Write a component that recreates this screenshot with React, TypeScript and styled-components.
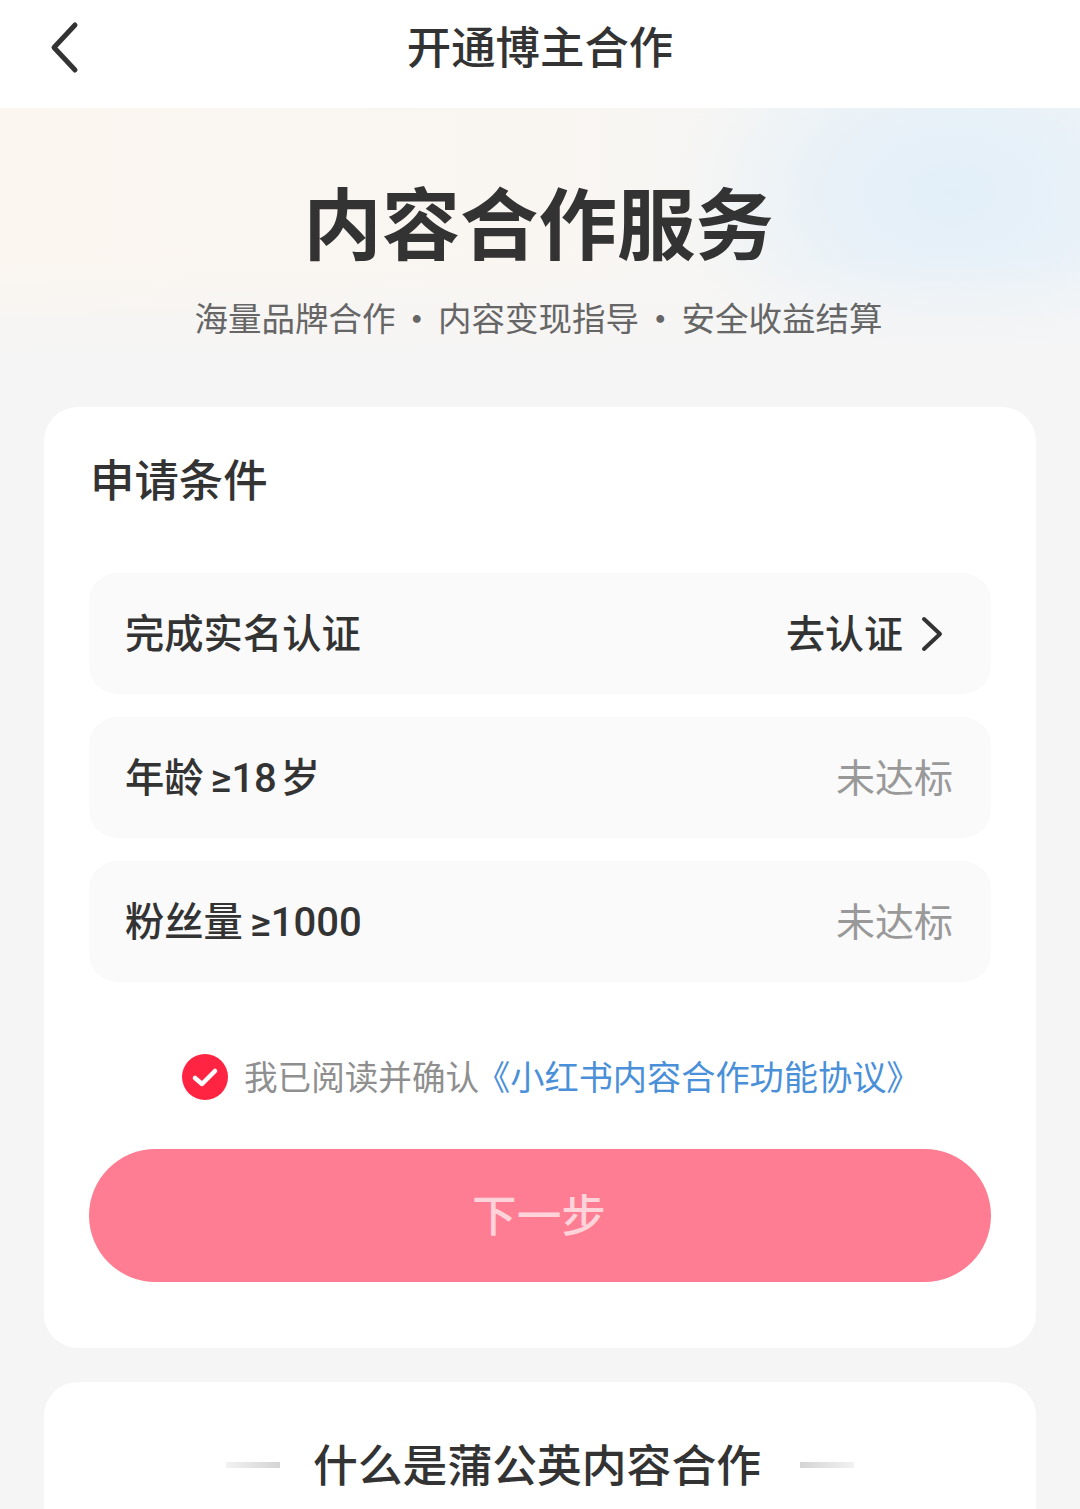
import styled, { createGlobalStyle } from "styled-components"

const GlobalStyle = createGlobalStyle`
  html, body {
    margin: 0;
    padding: 0;
    background: #f5f5f5;
  }
  * { box-sizing: border-box; }
`

const Page = styled.div`
  width: 1080px;
  height: 1509px;
  overflow: hidden;
  background: #f5f5f5;
  font-family: "Noto Sans CJK SC", "Noto Sans", sans-serif;
  color: #333;
`

const Header = styled.header`
  height: 108px;
  background: #fff;
  display: flex;
  align-items: center;
  justify-content: center;
  position: relative;
`

const BackIcon = styled.svg`
  position: absolute;
  left: 44px;
  top: 18px;
  width: 44px;
  height: 60px;
`

const HeaderTitle = styled.h1`
  margin: 0 0 18px;
  font-size: 44.4px;
  line-height: 56px;
  font-weight: 500;
  color: #333;
`

const Hero = styled.section`
  height: 299px;
  padding-top: 67px;
  display: flex;
  flex-direction: column;
  align-items: center;
  background:
    linear-gradient(to bottom, rgba(245, 245, 245, 0) 50%, #f5f5f5 85%),
    radial-gradient(ellipse 280px 190px at 950px 85px, #e2eff9 0%, rgba(226, 239, 249, 0.6) 50%, rgba(226, 239, 249, 0) 100%),
    linear-gradient(to right, #fbf6f0 0%, #f9f6f2 50%, #f3f5f7 100%);
`

const HeroTitle = styled.h2`
  margin: 0 3px 0 0;
  font-size: 78.4px;
  line-height: 90px;
  font-weight: 700;
  color: #333;
`

const HeroSub = styled.p`
  margin: 29px 3px 0 0;
  font-size: 33.5px;
  line-height: 46px;
  font-weight: 400;
  color: #666;
  display: flex;
  align-items: center;
`

const SubDot = styled.span`
  width: 42.5px;
  text-align: center;
  font-weight: 500;
`

const Card = styled.section`
  width: 992px;
  margin: 0 auto;
  background: #fff;
  border-radius: 34px;
`

const ApplyCard = styled(Card)`
  height: 941px;
  padding: 42px 45px 0 45px;
`

const CardTitle = styled.h3`
  margin: 0 0 66px 1px;
  font-size: 44.4px;
  line-height: 58px;
  font-weight: 500;
  color: #333;
`

const RowList = styled.div`
  display: flex;
  flex-direction: column;
  gap: 23px;
`

const Row = styled.div`
  height: 121px;
  padding: 0 38px 0 36px;
  border-radius: 28px;
  background: #fafafa;
  display: flex;
  align-items: center;
  justify-content: space-between;
`

const RowLabel = styled.span`
  padding-bottom: 6px;
  font-size: 39.3px;
  font-weight: 500;
  color: #333;
  display: flex;
  align-items: baseline;
`

// digits and the sign are set in a latin face, not the CJK one
const Metric = styled.span`
  margin: 0 4px 0 7px;
  font-family: "Roboto", sans-serif;
  font-size: 40px;
  font-weight: 500;
`

const RowAction = styled.span`
  margin-right: 9px;
  padding-bottom: 6px;
  display: flex;
  align-items: center;
  gap: 17px;
  font-size: 39px;
  font-weight: 500;
  color: #333;
`

const Chevron = styled.svg`
  width: 24px;
  height: 36px;
  margin-top: 7px;
`

const RowStatus = styled.span`
  padding-bottom: 6px;
  font-size: 39px;
  color: #999;
`

const Agreement = styled.div`
  margin-top: 71px;
  padding-left: 93px;
  height: 48px;
  display: flex;
  align-items: center;
  font-size: 33.6px;
  color: #8f8f8f;
  white-space: nowrap;
`

const CheckIcon = styled.svg`
  width: 46px;
  height: 46px;
  margin-right: 16px;
`

const AgreementText = styled.span`
  padding-bottom: 4px;
`

const AgreementLink = styled.span`
  padding-bottom: 4px;
  margin-left: -3px;
  font-size: 34.2px;
  color: #4a90d9;
`

const NextButton = styled.button`
  margin-top: 48px;
  padding: 0 2px 6px 0;
  width: 100%;
  height: 133px;
  border: none;
  border-radius: 67px;
  background: #ff7d92;
  color: #ffd3da;
  font-family: inherit;
  font-size: 44.6px;
  font-weight: 500;
  display: block;
`

const IntroCard = styled(Card)`
  margin-top: 34px;
  height: 200px;
  padding-top: 52px;
  display: flex;
  justify-content: center;
  align-items: flex-start;
  gap: 34px;
`

const IntroTitle = styled.h3`
  margin: 0 5px 0 -1px;
  font-size: 44.8px;
  line-height: 58px;
  font-weight: 500;
  color: #333;
`

const Rule = styled.span<{ $flip?: boolean }>`
  width: 54px;
  height: 6px;
  margin-top: 28px;
  background: linear-gradient(${p => (p.$flip ? "to left" : "to right")}, #f2f2f2, #d4d4d4);
`

const conditions = [
  { name: "年龄", metric: "≥18", unit: "岁" },
  { name: "粉丝量", metric: "≥1000", unit: "" },
]

export default function App() {
  return (
    <Page>
      <GlobalStyle />
      <Header>
        <BackIcon viewBox="0 0 44 60" fill="none">
          <path d="M31 7 L10 29.5 L31 52" stroke="#333" strokeWidth="5" strokeLinecap="round" strokeLinejoin="round" />
        </BackIcon>
        <HeaderTitle>开通博主合作</HeaderTitle>
      </Header>
      <Hero>
        <HeroTitle>内容合作服务</HeroTitle>
        <HeroSub>
          海量品牌合作<SubDot>·</SubDot>内容变现指导<SubDot>·</SubDot>安全收益结算
        </HeroSub>
      </Hero>
      <ApplyCard>
        <CardTitle>申请条件</CardTitle>
        <RowList>
          <Row>
            <RowLabel>完成实名认证</RowLabel>
            <RowAction>
              去认证
              <Chevron viewBox="0 0 24 36" fill="none">
                <path d="M4 3 L20 18 L4 33" stroke="#333" strokeWidth="4" strokeLinecap="round" strokeLinejoin="round" />
              </Chevron>
            </RowAction>
          </Row>
          {conditions.map(item => (
            <Row key={item.name}>
              <RowLabel>
                {item.name}
                <Metric>{item.metric}</Metric>
                {item.unit}
              </RowLabel>
              <RowStatus>未达标</RowStatus>
            </Row>
          ))}
        </RowList>
        <Agreement>
          <CheckIcon viewBox="0 0 46 46">
            <circle cx="23" cy="23" r="23" fill="#ff2442" />
            <path d="M13 24 L20 30 L33 17" fill="none" stroke="#fff" strokeWidth="4.5" strokeLinecap="round" strokeLinejoin="round" />
          </CheckIcon>
          <AgreementText>我已阅读并确认</AgreementText>
          <AgreementLink>《小红书内容合作功能协议》</AgreementLink>
        </Agreement>
        <NextButton>下一步</NextButton>
      </ApplyCard>
      <IntroCard>
        <Rule />
        <IntroTitle>什么是蒲公英内容合作</IntroTitle>
        <Rule $flip />
      </IntroCard>
    </Page>
  )
}
